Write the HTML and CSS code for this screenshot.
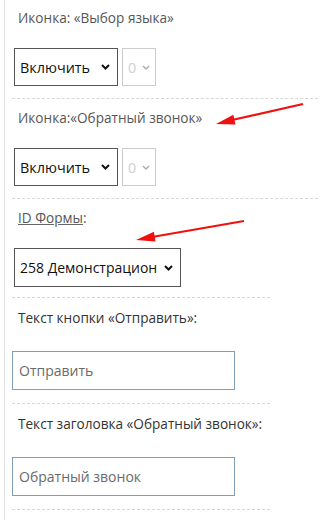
FILE: index.html
```html
<!DOCTYPE html>
<html lang="ru">

<head>
    <meta charset="utf-8">
    <title>Настройки виджета</title>
    <link rel="stylesheet" href="styles.css">
</head>

<body>
    <section class="panel">

        <div class="row row-wide">
            <div class="label">Иконка: «Выбор языка»</div>
            <div class="controls">
                <div class="pick pick-main">
                    <select>
                        <option>Включить</option>
                        <option>Выключить</option>
                    </select>
                    <svg class="chev" width="9" height="6" viewBox="0 0 9 6"><path d="M1 1 L4.5 4.5 L8 1" fill="none" stroke="#111" stroke-width="2"/></svg>
                </div>
                <div class="pick pick-off">
                    <select disabled>
                        <option>0</option>
                    </select>
                    <svg class="chev" width="8" height="5" viewBox="0 0 8 5"><path d="M1 1 L4 4 L7 1" fill="none" stroke="#aaa" stroke-width="1.4"/></svg>
                </div>
            </div>
        </div>

        <div class="row row-wide">
            <div class="label">Иконка:«Обратный звонок»</div>
            <div class="controls">
                <div class="pick pick-main">
                    <select>
                        <option>Включить</option>
                        <option>Выключить</option>
                    </select>
                    <svg class="chev" width="9" height="6" viewBox="0 0 9 6"><path d="M1 1 L4.5 4.5 L8 1" fill="none" stroke="#111" stroke-width="2"/></svg>
                </div>
                <div class="pick pick-off">
                    <select disabled>
                        <option>0</option>
                    </select>
                    <svg class="chev" width="8" height="5" viewBox="0 0 8 5"><path d="M1 1 L4 4 L7 1" fill="none" stroke="#aaa" stroke-width="1.4"/></svg>
                </div>
            </div>
        </div>

        <div class="row row-form">
            <div class="label"><u>ID Формы</u>:</div>
            <div class="controls">
                <div class="pick pick-form">
                    <select>
                        <option>258 Демонстрацион</option>
                    </select>
                    <svg class="chev" width="9" height="6" viewBox="0 0 9 6"><path d="M1 1 L4.5 4.5 L8 1" fill="none" stroke="#111" stroke-width="2"/></svg>
                </div>
            </div>
        </div>

        <div class="row row-text">
            <div class="label label-dark">Текст кнопки «Отправить»:</div>
            <input class="field" type="text" placeholder="Отправить">
        </div>

        <div class="row row-text">
            <div class="label label-dark">Текст заголовка «Обратный звонок»:</div>
            <input class="field" type="text" placeholder="Обратный звонок">
        </div>

    </section>

    <!-- стрелки поверх скриншота -->
    <svg class="arrows" width="324" height="520" viewBox="0 0 324 520">
        <line x1="303" y1="104" x2="232" y2="120" stroke="#f01010" stroke-width="2.2"/>
        <polygon points="216,124 235.5,124.6 233.3,114.8" fill="#f01010"/>
        <line x1="244" y1="221" x2="152" y2="237" stroke="#f01010" stroke-width="2.2"/>
        <polygon points="136,240 155.5,241.6 153.9,231.8" fill="#f01010"/>
    </svg>
</body>

</html>
```

FILE: styles.css
```css
body {
    margin: 0;
    background: #fff;
    font-family: "Open Sans", "Noto Sans", sans-serif;
}

.panel {
    margin-left: 4px;
    padding-left: 7px;
    border-left: 1px solid #e2e2e2;
    min-height: 520px;
    box-sizing: border-box;
}

.row {
    width: 258px;
    padding: 8px 0 12px 0;
    border-bottom: 1px dashed #d8d8d8;
}

.row-wide {
    width: 306px;
}

.row + .row {
    padding-top: 9px;
}

.label {
    padding-left: 6px;
    font-size: 13.6px;
    line-height: 20px;
    color: #565656;
}

.label u {
    text-decoration-color: #666;
}

.label-dark {
    color: #333;
}

.controls {
    display: flex;
    gap: 4px;
    margin-top: 20px;
    padding-left: 2px;
}

.pick {
    display: flex;
    align-items: center;
    height: 38px;
    box-sizing: border-box;
    border: 1px solid #555;
    background: #fff;
}

.pick select {
    -webkit-appearance: none;
    appearance: none;
    border: none;
    outline: none;
    background: transparent;
    font-family: inherit;
    font-size: 14.4px;
    color: #111;
    padding: 0 0 0 5px;
    flex: 1;
    min-width: 0;
}

.pick-main {
    width: 104px;
}

.pick-main .chev {
    margin-right: 7px;
}

.pick-off {
    width: 34px;
    border-color: #ccc;
}

.pick-off select {
    color: #bbb;
    padding-left: 5px;
}

.pick-off .chev {
    margin-right: 5px;
}

.row-form {
    padding-bottom: 10px;
}

.pick-form {
    width: 167px;
    height: 39px;
}

.pick-form select {
    font-size: 14px;
}

.pick-form .chev {
    margin-right: 7px;
}

.row + .row-text {
    padding-top: 10px;
    padding-bottom: 13px;
}

.field {
    display: block;
    margin-top: 23px;
    width: 223px;
    height: 39px;
    box-sizing: border-box;
    border: 1px solid #7f9ebc;
    padding: 0 6px;
    font-family: inherit;
    font-size: 14px;
    outline: none;
}

.field::placeholder {
    color: #6a6a6a;
}

.arrows {
    position: absolute;
    left: 0;
    top: 0;
    pointer-events: none;
}
```
